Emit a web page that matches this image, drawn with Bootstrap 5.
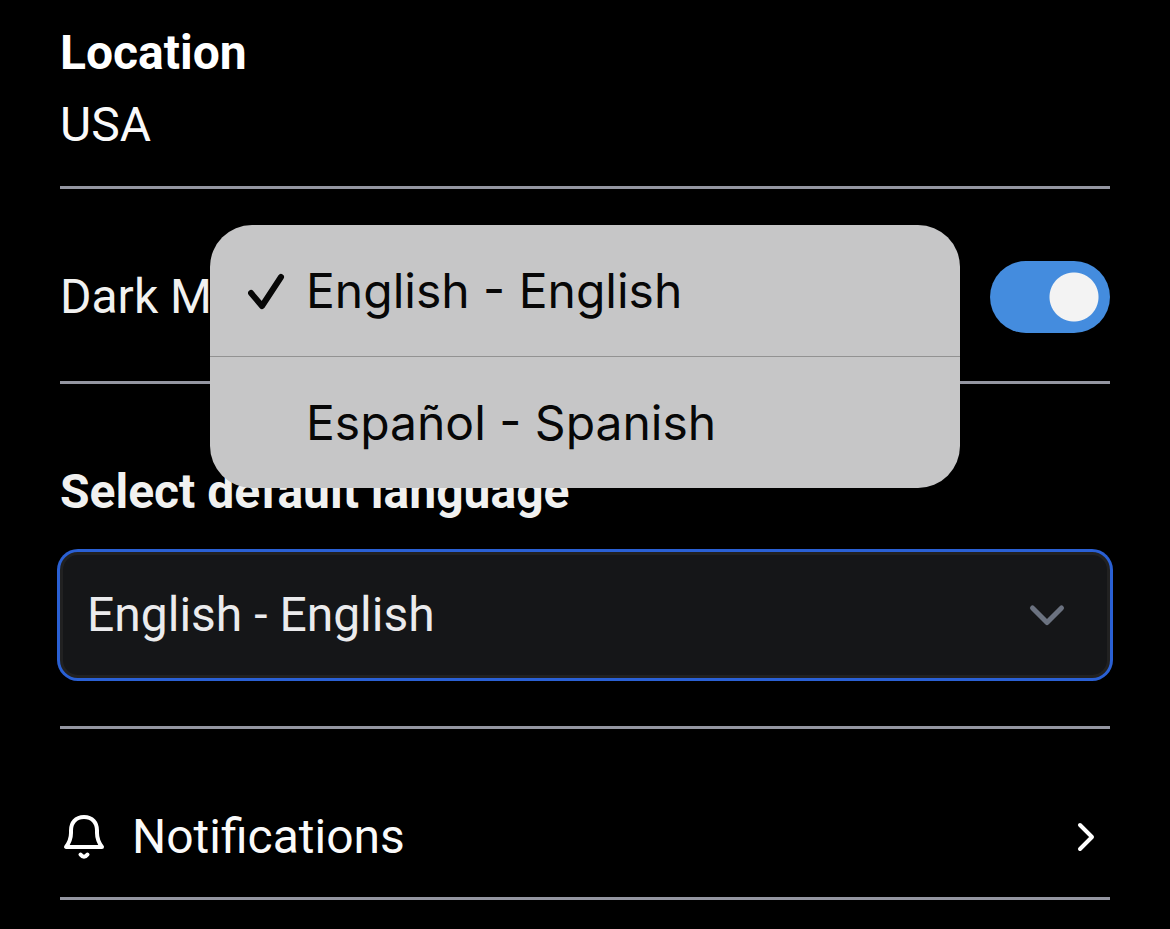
<!DOCTYPE html>
<html lang="en" data-bs-theme="dark">
<head>
<meta charset="utf-8">
<meta name="viewport" content="width=device-width, initial-scale=1">
<title>Settings</title>
<link href="https://cdn.jsdelivr.net/npm/bootstrap@5.3.0/dist/css/bootstrap.min.css" rel="stylesheet">
<style>
  body {
    background: #000;
    color: #fafafa;
    font-family: Roboto, "Liberation Sans", sans-serif;
    font-size: 48px;
    line-height: 72px;
  }
  .settings { padding: 17px 60px 0; }
  .setting { border-bottom: 3px solid #9496a1; }
  .setting-top { padding-bottom: 25px; }
  .setting-mid { padding: 72px 0 48px; color: #f1f1f0; }
  .setting-nav { padding: 72px 0 24px; }
  .setting-title { font-size: 48px; line-height: 72px; font-weight: 700; }

  .form-check-input.mode-switch {
    width: 120px;
    height: 72px;
    border: 0;
    border-radius: 36px;
    background: #448cde radial-gradient(circle at 84px 36px, #f3f3f3 24px, transparent 25px) no-repeat;
  }
  .form-check-input.mode-switch:not(:checked) { background-color: #444; background-position: -48px 0; }

  .language-select.form-select {
    height: 126px;
    padding: 24px 90px 24px 24px;
    font-size: 48px;
    line-height: 72px;
    color: #ebebed;
    background: #151618;
    border: 3px solid #212121;
    border-radius: 18px;
    box-shadow: 0 0 0 3px #2a60d4;
  }
  .select-caret { right: 39px; pointer-events: none; }

  .language-menu {
    bottom: calc(100% + 64px);
    width: 750px;
    max-width: 100%;
    border-radius: 42px;
    background: #c6c6c7;
    font-family: Inter, "Liberation Sans", sans-serif;
  }
  .language-menu button {
    height: 131px;
    padding: 0 36px 0 38px;
    gap: 20px;
    background: none;
    color: #070707;
    font-size: 48px;
    line-height: 72px;
  }
  .language-menu button + button { border-top: 1px solid #929292 !important; height: 132px; }
  .check-slot { width: 38px; height: 38px; }
</style>
</head>
<body>
<main class="settings">
  <section class="setting setting-top">
    <h2 class="setting-title m-0">Location</h2>
    <p class="m-0">USA</p>
  </section>

  <section class="setting setting-mid d-flex justify-content-between align-items-center">
    <label for="darkMode">Dark Mode</label>
    <input class="form-check-input mode-switch m-0" type="checkbox" role="switch" id="darkMode" checked>
  </section>

  <section class="setting setting-mid">
    <label class="setting-title d-block mb-4" for="language">Select default language</label>
    <div class="position-relative d-flex align-items-center">
      <select class="form-select language-select" id="language">
        <option selected>English - English</option>
        <option>Español - Spanish</option>
      </select>
      <svg class="select-caret position-absolute" width="48" height="48" viewBox="0 0 48 48" fill="none" stroke="#6b7280" stroke-width="5" stroke-linecap="round" stroke-linejoin="round" aria-hidden="true">
        <path d="M9.500 17 24 31.500 38.500 17"/>
      </svg>
      <div class="language-menu position-absolute start-50 translate-middle-x overflow-hidden" role="menu">
        <button type="button" role="menuitemradio" aria-checked="true" class="d-flex align-items-center w-100 border-0 text-start">
          <svg class="check-slot" viewBox="0 0 38 38" fill="none" stroke="#070707" stroke-width="6" stroke-linecap="round" stroke-linejoin="round" aria-hidden="true">
            <path d="M3 21 14 34 33 5"/>
          </svg>
          <span>English - English</span>
        </button>
        <button type="button" role="menuitemradio" aria-checked="false" class="d-flex align-items-center w-100 border-0 text-start">
          <span class="check-slot"></span>
          <span>Español - Spanish</span>
        </button>
      </div>
    </div>
  </section>

  <a href="#notifications" class="setting setting-nav d-flex align-items-center text-reset text-decoration-none">
    <svg class="me-4" width="48" height="48" viewBox="0 0 48 48" fill="none" stroke="#fff" stroke-width="4" stroke-linecap="round" stroke-linejoin="round" aria-hidden="true">
      <path d="M24 4C15.500 4 11 10 11 17.500V20C11 26 9 30 6 34H42C39 30 37 26 37 20V17.500C37 10 32.500 4 24 4Z"/>
      <path d="M20.500 41.500Q24 46 27.500 41.500"/>
    </svg>
    <span>Notifications</span>
    <svg class="ms-auto" width="48" height="48" viewBox="0 0 48 48" fill="none" stroke="#fff" stroke-width="4" stroke-linecap="round" stroke-linejoin="round" aria-hidden="true">
      <path d="M18 12 30 24 18 36"/>
    </svg>
  </a>
</main>
<script src="https://cdn.jsdelivr.net/npm/bootstrap@5.3.0/dist/js/bootstrap.bundle.min.js"></script>
</body>
</html>
